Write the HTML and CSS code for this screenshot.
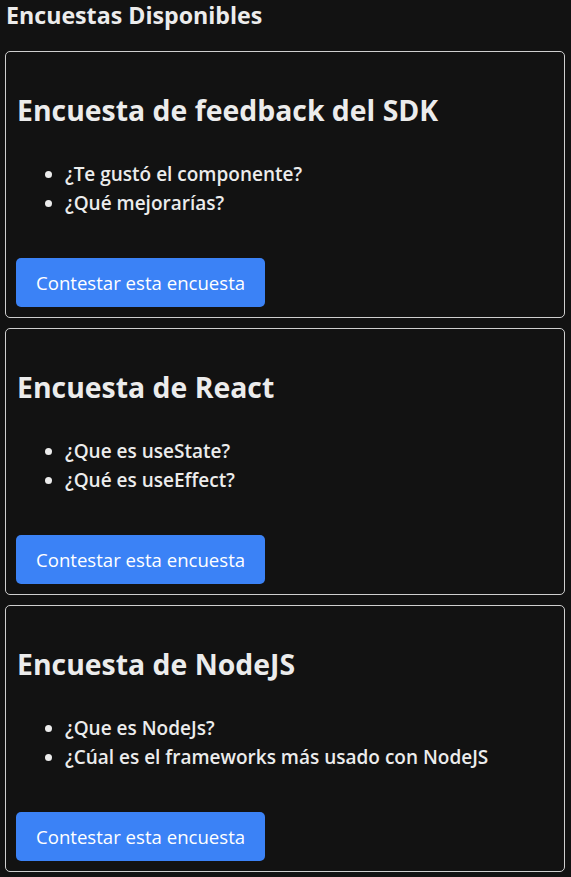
FILE: index.html
```html
<!DOCTYPE html>
<html lang="es">
<head>
<meta charset="utf-8">
<title>Encuestas</title>
<link rel="stylesheet" href="styles.css">
</head>
<body>
  <h2 class="page-title">Encuestas Disponibles</h2>
  <div class="list">
    <section class="card">
      <h1 class="card-title">Encuesta de feedback del SDK</h1>
      <ul class="questions">
        <li>¿Te gustó el componente?</li>
        <li>¿Qué mejorarías?</li>
      </ul>
      <button class="btn">Contestar esta encuesta</button>
    </section>
    <section class="card">
      <h1 class="card-title">Encuesta de React</h1>
      <ul class="questions">
        <li>¿Que es useState?</li>
        <li>¿Qué es useEffect?</li>
      </ul>
      <button class="btn">Contestar esta encuesta</button>
    </section>
    <section class="card">
      <h1 class="card-title">Encuesta de NodeJS</h1>
      <ul class="questions">
        <li>¿Que es NodeJs?</li>
        <li>¿Cúal es el frameworks más usado con NodeJS</li>
      </ul>
      <button class="btn">Contestar esta encuesta</button>
    </section>
  </div>
</body>
</html>
```

FILE: styles.css
```css
html, body {
  margin: 0;
  background: #121212;
}
body {
  padding: 0 6px 0 5px;
  color: #e6e6e6;
  font-family: "Open Sans", "Noto Sans", sans-serif;
}
.page-title {
  margin: 0;
  padding-left: 1px;
  font-size: 23.2px;
  line-height: 30px;
  font-weight: 700;
  color: #ececec;
}
.list {
  margin-top: 21px;
  display: flex;
  flex-direction: column;
  gap: 10px;
}
.card {
  border: 1px solid #cfcfcf;
  border-radius: 5px;
  padding: 10px;
  height: 267px;
  box-sizing: border-box;
  display: flex;
  flex-direction: column;
  align-items: flex-start;
}
.card-title {
  margin: 30px 0 0 1px;
  font-size: 28.4px;
  line-height: 36px;
  font-weight: 700;
  color: #ececec;
}
.questions {
  margin: 32px 0 0;
  padding-left: 49px;
  font-size: 19px;
  line-height: 29px;
  font-weight: 600;
  color: #ececec;
}
.btn {
  margin-top: auto;
  border: 0;
  border-radius: 5px;
  background: #3b82f6;
  color: #ffffff;
  font-family: inherit;
  font-size: 18.6px;
  height: 49px;
  padding: 0 20px;
  cursor: pointer;
}
```
